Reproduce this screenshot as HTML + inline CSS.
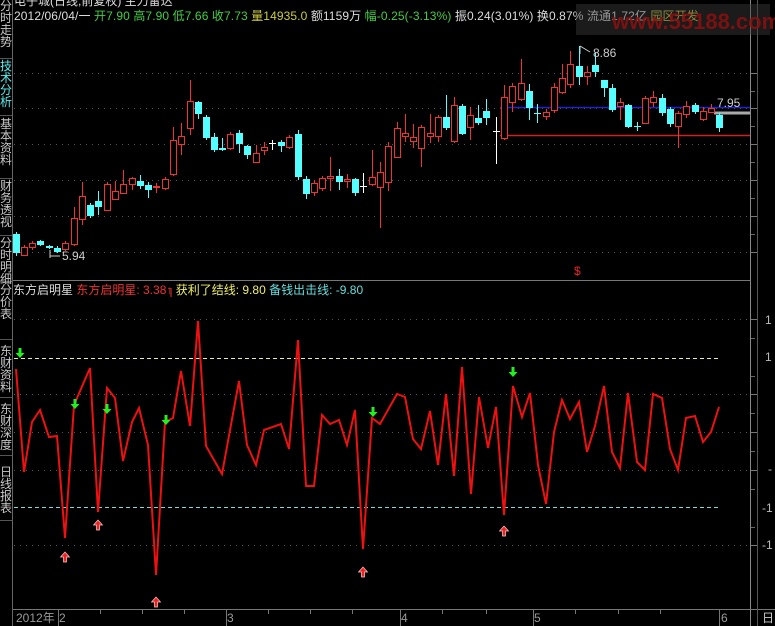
<!DOCTYPE html>
<html><head><meta charset="utf-8"><style>
body{margin:0;background:#000;width:775px;height:626px;overflow:hidden;position:relative;font-family:"Liberation Sans","Noto Sans CJK SC",sans-serif;font-size:12px}
.t{position:absolute;white-space:nowrap;line-height:12px}
.side{position:absolute;left:0;width:12px;color:#c8c8c8;font-size:12px;line-height:12px;text-align:center;border-bottom:1px solid #555}
</style></head><body>
<svg id="s" width="775" height="626" style="position:absolute;left:0;top:0"></svg>
<div class="t" style="left:14px;top:-5px;color:#ddd">电子城(日线,前复权) 主力雷达</div>
<div class="t" style="left:14px;top:10px;color:#ddd;letter-spacing:0.1px">2012/06/04/一 <span style="color:#4c4">开7.90 高7.90 低7.66 收7.73</span> <span style="color:#cc4">量14935.0</span> 额1159万 <span style="color:#4c4">幅-0.25(-3.13%)</span> 振0.24(3.01%) 换0.87% 流通1.72亿 <span style="color:#cc4">园区开发</span></div>
<div style="position:absolute;left:576px;top:4px;width:194px;height:31px;background:rgba(60,60,60,0.45)"></div>
<div class="t" style="left:612px;top:11px;color:rgba(140,15,15,0.85);font-size:22px;line-height:22px;font-weight:bold">www.55188.com</div>
<div class="t" style="left:593px;top:47px;color:#ccc">8.86</div>
<div class="t" style="left:62px;top:250px;color:#ccc">5.94</div>
<div class="t" style="left:717px;top:97px;color:#ccc">7.95</div>
<div class="t" style="left:574px;top:265px;color:#e22">$</div>
<div class="t" style="left:13px;top:284px;color:#ddd">东方启明星 <span style="color:#e33">东方启明星: 3.38</span><span style="color:#e33">↑</span> <span style="color:#ee6">获利了结线: 9.80</span> <span style="color:#6dd">备钱出击线: -9.80</span></div>
<div class="t" style="left:765px;top:314px;color:#bbb">1</div>
<div class="t" style="left:765px;top:351px;color:#bbb">1</div>
<div class="t" style="left:768px;top:463px;color:#bbb">-</div>
<div class="t" style="left:762px;top:502px;color:#bbb">-1</div>
<div class="t" style="left:762px;top:539px;color:#bbb">-1</div>
<div class="t" style="left:16px;top:612px;color:#999">2012年</div>
<div class="t" style="left:59px;top:612px;color:#999">2</div>
<div class="t" style="left:227px;top:612px;color:#999">3</div>
<div class="t" style="left:401px;top:612px;color:#999">4</div>
<div class="t" style="left:534px;top:612px;color:#999">5</div>
<div class="t" style="left:721px;top:612px;color:#999">6</div>
<div class="t" style="left:762px;top:612px;color:#ccc">日</div>
<div class="side" style="top:0;height:58px">分时走势</div>
<div class="side" style="top:60px;height:55px;color:#5ee">技术分析</div>
<div class="side" style="top:118px;height:60px">基本资料</div>
<div class="side" style="top:180px;height:55px">财务透视</div>
<div class="side" style="top:237px;height:44px">分时明细</div>
<div class="side" style="top:284px;height:55px">分价表</div>
<div class="side" style="top:345px;height:52px">东财资料</div>
<div class="side" style="top:403px;height:52px">东财深度</div>
<div class="side" style="top:466px;height:54px">日线报表</div>
<script>
var S=document.getElementById('s'),h='';
function L(x1,y1,x2,y2,c,w,d){h+='<line x1="'+x1+'" y1="'+y1+'" x2="'+x2+'" y2="'+y2+'" stroke="'+c+'" stroke-width="'+(w||1)+'"'+(d?' stroke-dasharray="'+d+'"':'')+'/>';}
h+='<line x1="12.5" y1="0" x2="12.5" y2="626" stroke="#666"/>';
[73,108,144,180,216,252,319,394,432,470,545].forEach(function(y){L(14,y+.5,750,y+.5,'#555',1,'1 5');L(750,y+.5,757,y+.5,'#777');});
[91,126,162,198,234,338,376,413,451,489,527].forEach(function(y){L(750,y+.5,755,y+.5,'#666');});
L(750.5,0,750.5,626,'#888');L(13,280.5,750,280.5,'#777');L(13,609.5,775,609.5,'#777');L(757.5,0,757.5,626,'#555');
[58,226,400,533,719].forEach(function(x){L(x+.5,610,x+.5,626,'#777');});
[100,142,184,268,310,352,442,486,575,618,660].forEach(function(x){L(x+.5,610,x+.5,614,'#777');});
L(14,358.5,718,358.5,'#ee9',1,'4 3');L(14,507.5,718,507.5,'#7dd',1,'4 3');
L(500,107.5,750,107.5,'#22c',1.5);L(500,135.5,750,135.5,'#c22',1.5);L(714,113,750,113,'#aaa',3);
L(580,46,580,54,'#ccc');L(580,46,590,52,'#ccc');L(50,250,50,258,'#ccc');L(50,256,60,256,'#ccc');
var C=[[16,'c',234,253,232,256],[24,'r',247,255,245,256],[32,'r',243,247,241,250],[40,'c',241,245,240,246],[49,'c',246,248,245,249],[57,'c',248,252,246,253],[65,'r',243,249,241,251],[74,'r',218,244,207,246],[82,'r',196,219,182,225],[90,'c',205,216,203,218],[98,'c',201,207,191,215],[107,'r',184,210,182,211],[115,'r',191,199,181,200],[123,'r',184,193,170,194],[132,'r',178,184,177,190],[140,'c',181,186,175,189],[148,'c',185,190,182,198],[156,'r',186,187,183,193],[165,'r',179,188,177,190],[173,'r',140,174,127,176],[181,'r',136,144,123,155],[190,'r',101,128,80,135],[198,'c',102,114,101,119],[206,'c',117,138,115,140],[214,'c',137,150,133,152],[222,'c',148,150,138,151],[230,'r',134,148,132,150],[239,'c',133,144,130,153],[247,'c',146,155,145,159],[256,'r',153,162,145,163],[264,'r',147,150,142,155],[272,'w',143,143,140,150],[281,'c',142,146,140,152],[289,'r',137,147,135,149],[298,'c',134,177,130,180],[306,'c',179,194,176,199],[314,'r',183,192,180,196],[322,'r',178,188,176,191],[330,'r',176,178,157,191],[339,'c',176,182,169,190],[347,'r',179,181,174,188],[355,'c',179,193,178,196],[363,'w',186,186,173,193],[372,'r',177,184,150,186],[380,'r',172,187,162,228],[388,'r',146,182,142,191],[397,'r',128,157,122,158],[405,'r',133,136,114,142],[413,'r',137,141,124,148],[421,'r',127,148,125,167],[430,'r',133,136,114,143],[438,'r',117,136,115,142],[446,'c',117,128,95,130],[454,'r',105,141,97,143],[462,'c',106,134,104,135],[470,'r',115,127,107,140],[478,'c',118,123,105,125],[486,'c',111,118,99,125],[496,'w',131,131,117,164],[504,'r',97,138,85,140],[512,'r',86,102,83,112],[521,'r',83,99,59,101],[529,'c',91,108,84,120],[537,'c',113,113,104,123],[546,'r',112,116,109,120],[554,'r',87,110,83,113],[562,'r',78,92,64,94],[570,'r',64,84,51,88],[579,'c',66,77,46,85],[587,'r',72,76,66,85],[595,'c',65,72,53,77],[604,'c',80,88,80,97],[612,'c',88,110,84,112],[620,'r',102,106,98,120],[628,'c',105,127,104,128],[637,'c',126,126,122,131],[645,'r',98,123,96,124],[653,'r',97,102,91,107],[662,'c',98,113,94,116],[670,'c',109,124,107,127],[678,'r',113,126,111,148],[686,'r',106,114,101,118],[695,'c',105,112,103,114],[703,'r',111,119,107,121],[711,'r',108,112,104,113],[719,'c',115,128,113,132]];
C.forEach(function(k){var x=k[0],t=k[1];var col=t=='c'?'#5ff':t=='r'?'#e33':'#fff';
L(x+.5,k[4],x+.5,k[5],col);
if(t=='w'){L(x-3,k[2]+.5,x+4,k[2]+.5,col);return;}
var hgt=Math.max(k[3]-k[2],1);
if(t=='c')h+='<rect x="'+(x-3)+'" y="'+k[2]+'" width="7" height="'+hgt+'" fill="#5ff"/>';
else h+='<rect x="'+(x-2.5)+'" y="'+(k[2]+.5)+'" width="6" height="'+hgt+'" fill="#000" stroke="#e33"/>';});
var P=[[16,369],[24,472],[32,422],[40,410],[49,437],[57,436],[65,538],[74,405],[90,368],[98,512],[107,388],[115,398],[123,461],[132,422],[139,408],[148,445],[156,575],[165,422],[173,418],[181,371],[190,426],[198,321],[206,446],[222,474],[239,381],[247,445],[256,465],[264,430],[281,424],[289,449],[298,340],[306,486],[314,486],[322,415],[330,424],[339,420],[347,445],[355,410],[363,549],[372,418],[380,424],[397,394],[405,397],[413,439],[421,449],[430,411],[438,465],[446,394],[454,476],[462,367],[471,494],[479,397],[488,448],[496,407],[504,515],[513,386],[522,417],[530,393],[538,465],[546,504],[554,432],[562,400],[570,419],[579,402],[587,452],[595,426],[604,386],[612,452],[620,468],[628,393],[637,462],[645,470],[653,394],[662,398],[670,449],[678,470],[686,418],[695,416],[703,442],[711,432],[719,407]];
h+='<polyline fill="none" stroke="#e11" stroke-width="2" points="'+P.map(function(p){return p.join(',')}).join(' ')+'"/>';
function dn(x,y){h+='<path d="M'+(x-1.5)+' '+(y-6)+'h3v5h3l-4.5 5l-4.5-5h3z" fill="#2e2"/>';}
function up(x,y){h+='<path d="M'+(x-1.5)+' '+(y+6)+'h3v-5h3l-4.5-5l-4.5 5h3z" fill="#e22" stroke="#fcc" stroke-width=".7"/>';}
[[20,354],[75,405],[107,410],[166,421],[373,413],[513,373]].forEach(function(p){dn(p[0],p[1]);});
[[65,556],[98,524],[156,601],[363,571],[504,530]].forEach(function(p){up(p[0],p[1]);});
L(171,288,171,297,'#e33');
S.innerHTML=h;
</script>
</body></html>
